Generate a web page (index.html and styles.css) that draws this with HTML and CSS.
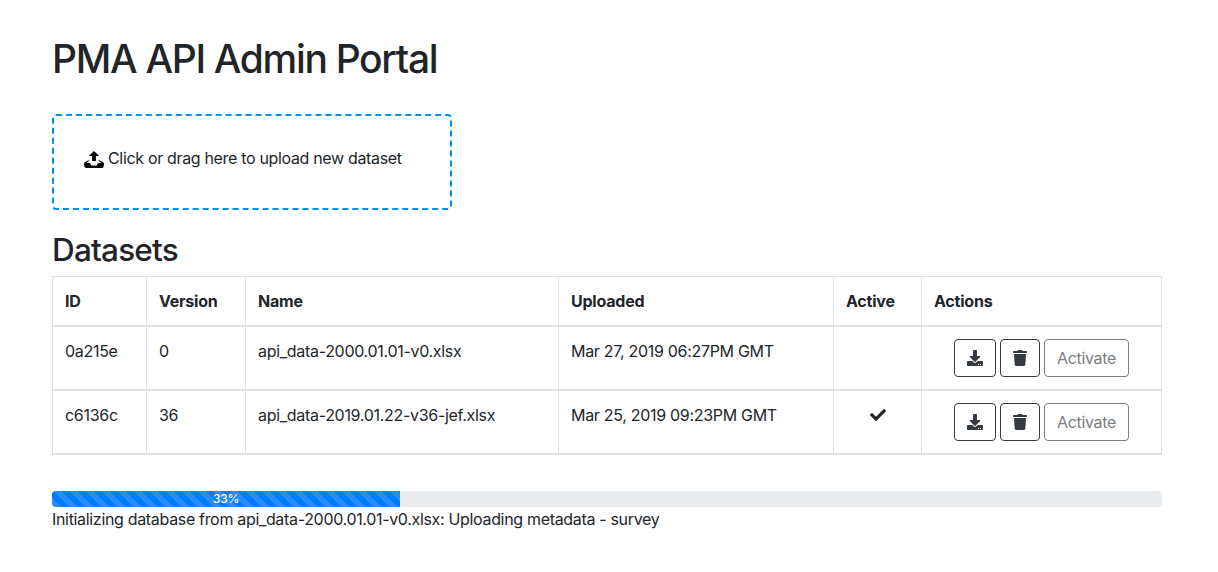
FILE: index.html
```html
<!DOCTYPE html>
<html lang="en">
<head>
<meta charset="utf-8">
<title>PMA API Admin Portal</title>
<link rel="stylesheet" href="styles.css">
</head>
<body>
<svg class="sprite" aria-hidden="true">
  <symbol id="download" viewBox="0 0 512 512"><path d="M216 0h80c13.3 0 24 10.7 24 24v168h87.7c17.8 0 26.7 21.5 14.1 34.1L269.7 378.3c-7.5 7.5-19.8 7.5-27.3 0L90.1 226.1c-12.6-12.6-3.7-34.1 14.1-34.1H192V24c0-13.3 10.7-24 24-24zm296 376v112c0 13.3-10.7 24-24 24H24c-13.3 0-24-10.7-24-24V376c0-13.3 10.7-24 24-24h146.7l49 49c20.1 20.1 52.5 20.1 72.6 0l49-49H488c13.3 0 24 10.7 24 24zm-124 88c0-11-9-20-20-20s-20 9-20 20 9 20 20 20 20-9 20-20zm64 0c0-11-9-20-20-20s-20 9-20 20 9 20 20 20 20-9 20-20z"/></symbol>
  <symbol id="trash" viewBox="0 0 448 512"><path d="M432 32H312l-9.4-18.7A24 24 0 0 0 281.1 0H166.8a23.72 23.72 0 0 0-21.4 13.3L136 32H16A16 16 0 0 0 0 48v32a16 16 0 0 0 16 16h416a16 16 0 0 0 16-16V48a16 16 0 0 0-16-16zM53.2 467a48 48 0 0 0 47.9 45h245.8a48 48 0 0 0 47.9-45L416 128H32z"/></symbol>
  <symbol id="check" viewBox="0 0 512 512"><path d="M173.898 439.404l-166.4-166.4c-9.997-9.997-9.997-26.206 0-36.204l36.203-36.204c9.997-9.998 26.207-9.998 36.204 0L192 312.69 432.095 72.596c9.997-9.997 26.207-9.997 36.204 0l36.203 36.204c9.997 9.997 9.997 26.206 0 36.204l-294.4 294.401c-9.998 9.997-26.207 9.997-36.204-.001z"/></symbol>
</svg>
<main class="container">
  <h1 class="title">PMA API Admin Portal</h1>
  <label class="dropzone">
    <svg class="upload-icon" width="20" height="17" viewBox="0 0 20 17"><path d="M10 0l-5.2 4.9h3.3v5.1h3.8v-5.1h3.3l-5.2-4.9zm9.3 11.5l-3.2-2.1h-2l3.4 2.6h-3.5c-.1 0-.2.1-.2.1l-.8 2.3h-6l-.8-2.2c-.1-.1-.1-.2-.2-.2h-3.6l3.4-2.6h-2l-3.2 2.1c-.4.3-.7 1-.6 1.5l.6 3.1c.1.5.7.9 1.2.9h16.3c.6 0 1.1-.4 1.3-.9l.6-3.1c.1-.5-.2-1.2-.7-1.5z"/></svg>
    <span class="dropzone-text">Click or drag here to upload new dataset</span>
  </label>
  <h2 class="subtitle">Datasets</h2>
  <table class="datasets">
    <colgroup><col class="c-id"><col class="c-version"><col class="c-name"><col class="c-uploaded"><col class="c-active"><col class="c-actions"></colgroup>
    <thead>
      <tr><th>ID</th><th>Version</th><th>Name</th><th>Uploaded</th><th>Active</th><th>Actions</th></tr>
    </thead>
    <tbody>
      <tr>
        <td>0a215e</td><td>0</td><td>api_data-2000.01.01-v0.xlsx</td><td>Mar 27, 2019 06:27PM GMT</td><td></td>
        <td><div class="actions">
          <button class="btn btn-download"><svg class="icon"><use href="#download"/></svg></button>
          <button class="btn btn-trash"><svg class="icon"><use href="#trash"/></svg></button>
          <button class="btn btn-activate" disabled>Activate</button>
        </div></td>
      </tr>
      <tr>
        <td>c6136c</td><td>36</td><td>api_data-2019.01.22-v36-jef.xlsx</td><td>Mar 25, 2019 09:23PM GMT</td>
        <td><div class="active"><svg class="icon"><use href="#check"/></svg></div></td>
        <td><div class="actions">
          <button class="btn btn-download"><svg class="icon"><use href="#download"/></svg></button>
          <button class="btn btn-trash"><svg class="icon"><use href="#trash"/></svg></button>
          <button class="btn btn-activate" disabled>Activate</button>
        </div></td>
      </tr>
    </tbody>
  </table>
  <div class="progress"><div class="progress-bar" style="width: 348px">33%</div></div>
  <div class="status">Initializing database from api_data-2000.01.01-v0.xlsx: Uploading metadata - survey</div>
</main>
</body>
</html>
```
FILE: styles.css
```css
* { box-sizing: border-box; }
body {
  margin: 0;
  background: #fff;
  color: #212529;
  font: 400 16px/24px Inter, "Liberation Sans", sans-serif;
  letter-spacing: -0.3px;
}
.sprite { display: none; }
.container { width: 1110px; margin: 0 0 0 52px; padding-top: 35px; }
.title { margin: 0 0 31px; font-size: 39px; line-height: 48px; font-weight: 500; letter-spacing: -1.32px; }
.dropzone {
  display: flex;
  gap: 4px;
  width: 400px;
  height: 96px;
  padding: 30px;
  border: 2px dashed #0090ee;
  border-radius: 4px;
}
.dropzone-text { letter-spacing: -0.33px; }
.upload-icon { margin-top: 5px; fill: #000; }
.subtitle { margin: 21px 0 7px; font-size: 31.5px; line-height: 38px; font-weight: 500; letter-spacing: -0.8px; }
.datasets {
  width: 1110px;
  table-layout: fixed;
  border-collapse: separate;
  border-spacing: 0;
  border: solid #dee2e6;
  border-width: 1px 0 0 1px;
}
.c-id { width: 94px; }
.c-version { width: 99px; }
.c-name { width: 313px; }
.c-uploaded { width: 275px; }
.c-active { width: 88px; }
.c-actions { width: 240px; }
th, td {
  padding: 12px;
  border: solid #dee2e6;
  border-width: 0 1px 2px 0;
  text-align: left;
  vertical-align: top;
}
th { font-weight: 700; letter-spacing: -0.22px; }
.icon { display: block; width: 16px; height: 16px; fill: currentColor; }
.active { display: flex; height: 24px; align-items: center; justify-content: center; }
.actions { display: flex; gap: 4px; padding-left: 20px; }
.btn {
  display: flex;
  align-items: center;
  justify-content: center;
  height: 38px;
  padding: 0;
  border: 1px solid #343a40;
  border-radius: 4px;
  background: transparent;
  color: #343a40;
  font: inherit;
  letter-spacing: inherit;
}
.btn-download { width: 42px; }
.btn-trash { width: 40px; }
.btn-activate { width: 85px; opacity: .65; }
.progress { height: 16px; margin-top: 36px; overflow: hidden; border-radius: 4px; background: #e9ecef; }
.progress-bar {
  height: 16px;
  color: #fff;
  font-size: 12px;
  font-weight: 500;
  line-height: 16px;
  text-align: center;
  background: linear-gradient(45deg, rgba(255,255,255,.15) 25%, transparent 25%, transparent 50%, rgba(255,255,255,.15) 50%, rgba(255,255,255,.15) 75%, transparent 75%, transparent) 1px 0 / 16px 16px #007bff;
}
.status { letter-spacing: -0.325px; }
```
